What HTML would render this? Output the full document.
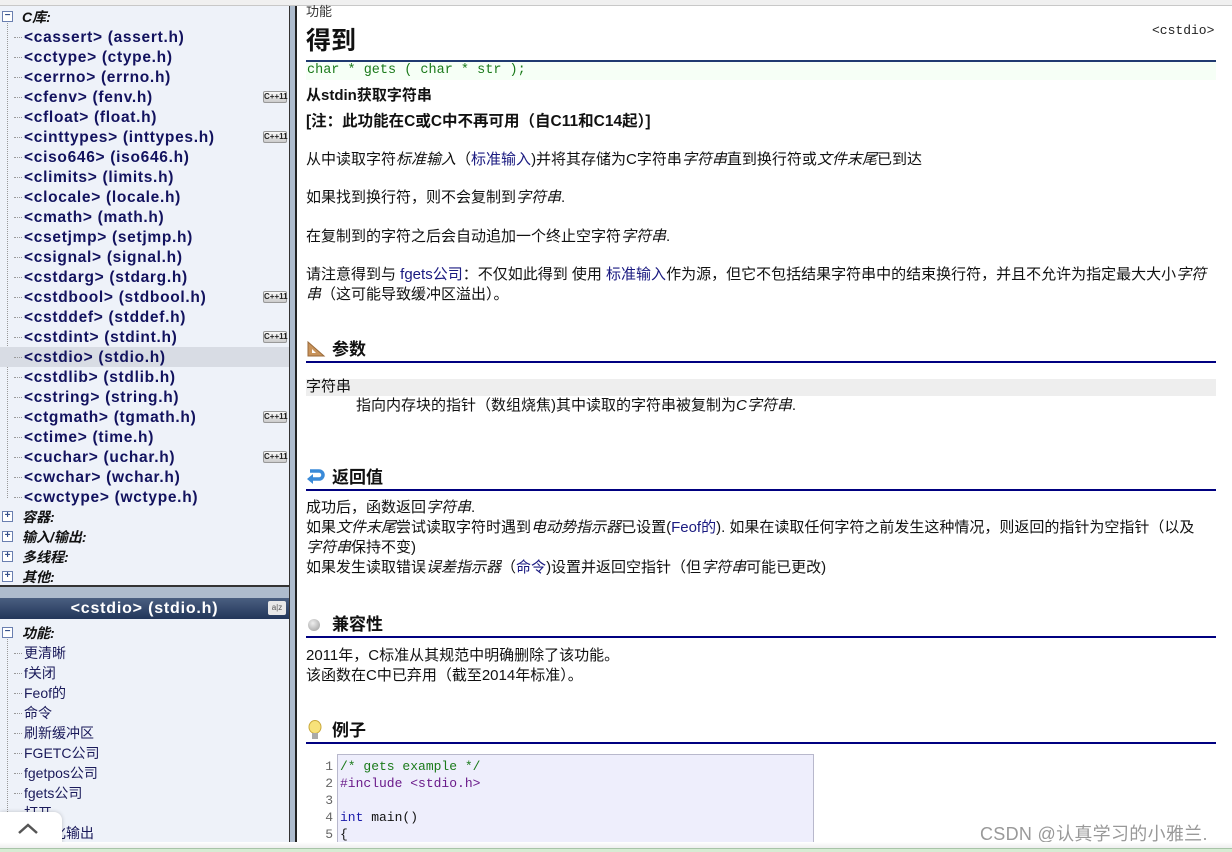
<!DOCTYPE html>
<html><head><meta charset="utf-8"><style>
*{margin:0;padding:0;box-sizing:border-box}
body{width:1232px;height:852px;overflow:hidden;background:#fff;position:relative;font-family:"Liberation Sans","Noto Sans CJK SC",sans-serif;font-size:14px;color:#111}
.a{position:absolute;white-space:nowrap}
#top{left:0;top:0;width:1232px;height:6px;background:#f0f0f0;border-bottom:1px solid #c8c8c8}
#lp{left:0;top:6px;width:289px;height:581px;background:#eef2f9;border-bottom:2px solid #333}
#lp2{left:0;top:598px;width:289px;height:250px;background:#eef2f9}
#gap{left:0;top:587px;width:297px;height:11px;background:#aebccd}
#bar{left:289px;top:6px;width:8px;height:842px;background:#aebccd;border-left:1px solid #333;border-right:2px solid #222}
#hd{left:0;top:598px;width:289px;height:21px;background:linear-gradient(#4a5f80,#22365a);color:#fff;font-weight:bold;font-size:16px;letter-spacing:0.8px;text-align:center;line-height:21px}
.it{position:absolute;left:24px;font-weight:bold;font-size:15.5px;letter-spacing:0.7px;color:#12125e;white-space:nowrap;line-height:20px}
.cat{position:absolute;left:22px;font-weight:bold;font-style:italic;font-size:14px;color:#111;line-height:20px}
.sub{position:absolute;left:24px;font-size:14px;color:#1a1a5a;line-height:20px}
.box{position:absolute;left:2px;width:11px;height:11px;border:1px solid #6a7fb0;background:#fff;font-size:10px;line-height:8px;text-align:center;color:#35508a;font-weight:bold}
.dot{position:absolute;left:14px;width:8px;border-top:1px dotted #999}
.vl{position:absolute;left:7px;border-left:1px dotted #999}
.cpp{position:absolute;left:263px;width:24px;height:12px;border:1px solid #999;border-radius:2px;background:linear-gradient(#fafafa,#ccc);font-size:8px;font-weight:bold;line-height:10px;text-align:center;color:#222}
.p{position:absolute;left:306px;white-space:nowrap;font-size:15px;line-height:20px}
.h2{position:absolute;left:306px;width:910px;border-bottom:2px solid #000080;height:24px;font-weight:bold;font-size:17px;padding-left:26px;line-height:22px}
i{font-style:italic}
.lk{color:#1a1a80}
.ln{position:absolute;left:316px;width:17px;text-align:right;color:#666;font-family:"Liberation Mono",monospace;font-size:13px}
.cl{position:absolute;left:340px;font-family:"Liberation Mono",monospace;font-size:13px;white-space:nowrap}
</style></head><body>
<div class="a" id="top"></div>
<div class="a" id="lp"></div>
<div class="a" id="gap"></div>
<div class="a" id="lp2"></div>
<div class="a" id="bar"></div>

<div class="box" style="top:11px">−</div>
<div class="cat" style="top:7px">C库:</div>
<div class="vl" style="top:23px;height:475px"></div>
<div style="position:absolute;left:0;top:347px;width:289px;height:20px;background:#d8dce4"></div>
<div id="items"></div>
<script>
var L=["&lt;cassert&gt; (assert.h)","&lt;cctype&gt; (ctype.h)","&lt;cerrno&gt; (errno.h)","&lt;cfenv&gt; (fenv.h)","&lt;cfloat&gt; (float.h)","&lt;cinttypes&gt; (inttypes.h)","&lt;ciso646&gt; (iso646.h)","&lt;climits&gt; (limits.h)","&lt;clocale&gt; (locale.h)","&lt;cmath&gt; (math.h)","&lt;csetjmp&gt; (setjmp.h)","&lt;csignal&gt; (signal.h)","&lt;cstdarg&gt; (stdarg.h)","&lt;cstdbool&gt; (stdbool.h)","&lt;cstddef&gt; (stddef.h)","&lt;cstdint&gt; (stdint.h)","&lt;cstdio&gt; (stdio.h)","&lt;cstdlib&gt; (stdlib.h)","&lt;cstring&gt; (string.h)","&lt;ctgmath&gt; (tgmath.h)","&lt;ctime&gt; (time.h)","&lt;cuchar&gt; (uchar.h)","&lt;cwchar&gt; (wchar.h)","&lt;cwctype&gt; (wctype.h)"];
var cpp=[3,5,13,15,19,21],h="";
for(var k=0;k<L.length;k++){var t=28+k*20;h+='<div class="it" style="top:'+t+'px">'+L[k]+'</div><div class="dot" style="top:'+(t+9)+'px"></div>';if(cpp.indexOf(k)>=0)h+='<div class="cpp" style="top:'+(t+3)+'px">C++11</div>';}
var C=["容器:","输入/输出:","多线程:","其他:"];
for(k=0;k<4;k++){var t=507+k*20;h+='<div class="box" style="top:'+(t+4)+'px">+</div><div class="cat" style="top:'+t+'px">'+C[k]+'</div>';}
var S=["更清晰","f关闭","Feof的","命令","刷新缓冲区","FGETC公司","fgetpos公司","fgets公司","打开","格式化输出"];
h+='<div class="box" style="top:627px">−</div><div class="cat" style="top:623px">功能:</div><div class="vl" style="top:639px;height:205px"></div>';
for(k=0;k<S.length;k++){var t=643+k*20;h+='<div class="sub" style="top:'+t+'px">'+S[k]+'</div><div class="dot" style="top:'+(t+10)+'px"></div>';}
document.getElementById("items").innerHTML=h;
</script>
<div class="a" id="hd">&lt;cstdio&gt; (stdio.h)</div>
<div class="a" style="left:268px;top:601px;width:18px;height:14px;background:#e8e8e8;border-radius:2px;font-size:8px;color:#555;text-align:center;line-height:14px">a|z</div>

<div class="a" style="left:0;top:812px;width:62px;height:36px;background:#fff;border-radius:0 8px 0 0;box-shadow:0 0 4px rgba(0,0,0,.2)"></div>
<svg class="a" style="left:17px;top:822px" width="22" height="14"><path d="M2 11 L11 3 L20 11" stroke="#555" stroke-width="2.5" fill="none"/></svg>

<div class="p" style="top:2px;font-size:13px;color:#333">功能</div>
<div class="p" style="top:25px;font-size:25px;font-weight:bold;line-height:32px">得到</div>
<div class="a" style="left:1152px;top:23px;font-family:'Liberation Mono',monospace;font-size:13px;color:#222">&lt;cstdio&gt;</div>
<div class="a" style="left:306px;top:60px;width:910px;height:2px;background:#203a70"></div>
<div class="a" style="left:306px;top:62px;width:910px;height:18px;background:#f6fff6"></div>
<div class="a" style="left:307px;top:62px;font-family:'Liberation Mono',monospace;font-size:13.5px;color:#1a7a1a;line-height:18px">char * gets ( char * str );</div>
<div class="p" style="top:86px;font-weight:bold">从stdin获取字符串</div>
<div class="p" style="top:112px;font-weight:bold;font-size:15.5px">[注：此功能在C或C中不再可用（自C11和C14起）]</div>
<div class="p" style="top:150px">从中读取字符<i>标准输入</i>（<span class="lk">标准输入</span>)并将其存储为C字符串<i>字符串</i>直到换行符或<i>文件末尾</i>已到达</div>
<div class="p" style="top:188px">如果找到换行符，则不会复制到<i>字符串</i>.</div>
<div class="p" style="top:227px">在复制到的字符之后会自动追加一个终止空字符<i>字符串</i>.</div>
<div class="p" style="top:265px">请注意得到与 <span class="lk">fgets公司</span>：不仅如此得到 使用 <span class="lk">标准输入</span>作为源，但它不包括结果字符串中的结束换行符，并且不允许为指定最大大小<i>字符</i></div>
<div class="p" style="top:285px"><i>串</i>（这可能导致缓冲区溢出）。</div>

<div class="h2" style="top:339px">参数</div>
<svg class="a" style="left:306px;top:340px" width="20" height="18"><path d="M2 2 L2 16 L18 16 Z" fill="#c8935a" stroke="#9a6a3a"/><path d="M6 9 L6 13 L10 13 Z" fill="#fff"/></svg>
<div class="a" style="left:306px;top:379px;width:910px;height:17px;background:#eee"></div>
<div class="p" style="top:377px">字符串</div>
<div class="p" style="left:356px;top:396px">指向内存块的指针（数组烧焦)其中读取的字符串被复制为<i>C字符串</i>.</div>

<div class="h2" style="top:467px">返回值</div>
<svg class="a" style="left:306px;top:467px" width="20" height="18"><path d="M4 4 H13 A4 4 0 0 1 13 12 H6" stroke="#3a8ad8" stroke-width="3.5" fill="none"/><path d="M1 12 L7 7 L7 17 Z" fill="#3a8ad8"/></svg>
<div class="p" style="top:498px">成功后，函数返回<i>字符串</i>.</div>
<div class="p" style="top:518px">如果<i>文件末尾</i>尝试读取字符时遇到<i>电动势指示器</i>已设置(<span class="lk">Feof的</span>). 如果在读取任何字符之前发生这种情况，则返回的指针为空指针（以及</div>
<div class="p" style="top:538px"><i>字符串</i>保持不变)</div>
<div class="p" style="top:558px">如果发生读取错误<i>误差指示器</i>（<span class="lk">命令</span>)设置并返回空指针（但<i>字符串</i>可能已更改)</div>

<div class="h2" style="top:614px">兼容性</div>
<div class="a" style="left:308px;top:619px;width:12px;height:12px;border-radius:50%;background:radial-gradient(circle at 40% 35%,#eee,#999)"></div>
<div class="p" style="top:646px">2011年，C标准从其规范中明确删除了该功能。</div>
<div class="p" style="top:666px">该函数在C中已弃用（截至2014年标准）。</div>

<div class="h2" style="top:720px">例子</div>
<svg class="a" style="left:306px;top:720px" width="18" height="22"><ellipse cx="9" cy="7" rx="6" ry="6.5" fill="#f7e27a" stroke="#c9a83a"/><rect x="6" y="13" width="6" height="6" fill="#aaa"/></svg>
<div class="a" style="left:337px;top:754px;width:477px;height:98px;background:#eeeefc;border:1px solid #b8b8cc"></div>
<div class="ln" style="top:758px;line-height:17px">1<br>2<br>3<br>4<br>5</div>
<div class="cl" style="top:758px;line-height:17px"><span style="color:#1a7a1a">/* gets example */</span><br><span style="color:#6a1a8a">#include &lt;stdio.h&gt;</span><br><br><span style="color:#1a1aaa">int</span> main()<br>{</div>

<div class="a" style="left:980px;top:820px;font-size:18px;color:#999;letter-spacing:0.3px">CSDN @认真学习的小雅兰.</div>
<div class="a" style="left:0;top:842px;width:1232px;height:6px;background:linear-gradient(#fff,#eee)"></div>
<div class="a" style="left:0;top:848px;width:1232px;height:4px;background:#d6ecd3;border-top:1px solid #a8c4a8"></div>
</body></html>
